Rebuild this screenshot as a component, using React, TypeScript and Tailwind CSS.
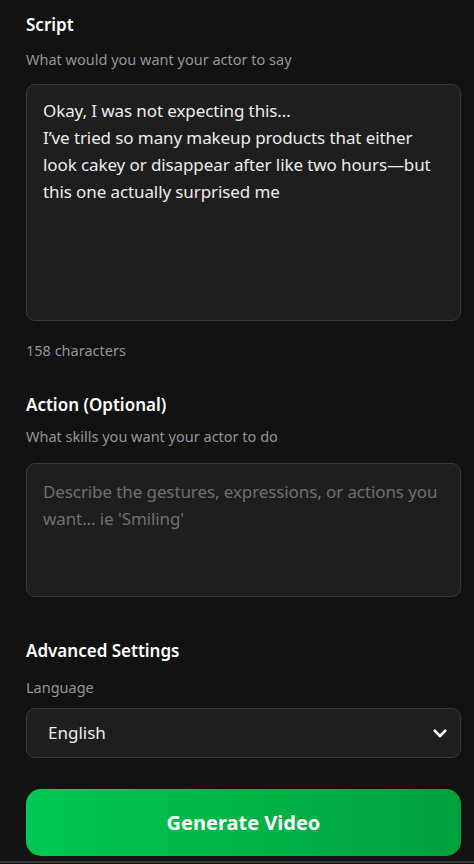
import React, { useState } from "react";

const font = { fontFamily: '"Noto Sans", "Open Sans", sans-serif' };

const App = () => {
  const [script, setScript] = useState(
    "Okay, I was not expecting this\u2026\nI\u2019ve tried so many makeup products that either look cakey or disappear after like two hours\u2014but this one actually surprised me"
  );
  const [action, setAction] = useState("");
  const [language, setLanguage] = useState("English");

  return (
    <div className="min-h-screen bg-[#121212] text-white" style={font}>
      <div className="pl-[26px] pr-[13px] pt-[13px]">
        {/* Script */}
        <h2 className="text-[17px] font-semibold leading-[24px]">Script</h2>
        <p className="mt-[12px] text-[14.5px] leading-[20px] text-[#90949d]">
          What would you want your actor to say
        </p>
        <textarea
          value={script}
          onChange={(e) => setScript(e.target.value)}
          className="mt-[15px] block h-[237px] w-full resize-none rounded-[9px] border border-[#383838] bg-[#1e1e1e] px-[16px] pt-[12px] text-[17px] leading-[27px] tracking-[-0.1px] text-[#ececec] outline-none"
        />
        <p className="mt-[19px] text-[14.5px] leading-[20px] text-[#90949d]">
          {script.length} characters
        </p>

        {/* Action */}
        <h2 className="mt-[33px] text-[17px] font-semibold leading-[24px]">Action (Optional)</h2>
        <p className="mt-[9px] text-[14.5px] leading-[20px] text-[#90949d]">
          What skills you want your actor to do
        </p>
        <textarea
          value={action}
          onChange={(e) => setAction(e.target.value)}
          placeholder="Describe the gestures, expressions, or actions you want... ie 'Smiling'"
          className="mt-[17px] block h-[134px] w-full resize-none rounded-[9px] border border-[#383838] bg-[#1e1e1e] px-[16px] pt-[14px] text-[17px] leading-[27px] tracking-[-0.1px] text-[#ececec] outline-none placeholder:text-[#6e6e6e]"
        />

        {/* Advanced */}
        <h2 className="mt-[42px] text-[17px] font-semibold leading-[24px]">Advanced Settings</h2>
        <p className="mt-[14px] text-[14.5px] leading-[20px] text-[#90949d]">Language</p>
        <div className="relative mt-[11px]">
          <select
            value={language}
            onChange={(e) => setLanguage(e.target.value)}
            className="block h-[50px] w-full appearance-none rounded-[9px] border border-[#383838] bg-[#1e1e1e] pl-[21px] text-[17px] text-[#ececec] outline-none"
          >
            <option>English</option>
            <option>Spanish</option>
            <option>French</option>
            <option>German</option>
          </select>
          <svg
            className="pointer-events-none absolute right-[12px] top-1/2 h-[18px] w-[18px] -translate-y-1/2"
            viewBox="0 0 24 24"
            fill="none"
            stroke="white"
            strokeWidth={3.5}
            strokeLinecap="round"
            strokeLinejoin="round"
          >
            <path d="M5 9l7 7 7-7" />
          </svg>
        </div>

        <button className="mt-[31px] flex h-[67px] w-full items-center justify-center rounded-[15px] bg-gradient-to-r from-[#00c853] to-[#00a13d] text-[20px] font-bold text-white">
          Generate Video
        </button>
      </div>
      <div className="mt-[5px] h-[2px] bg-[#3a3733]" />
    </div>
  );
};

export default App;
